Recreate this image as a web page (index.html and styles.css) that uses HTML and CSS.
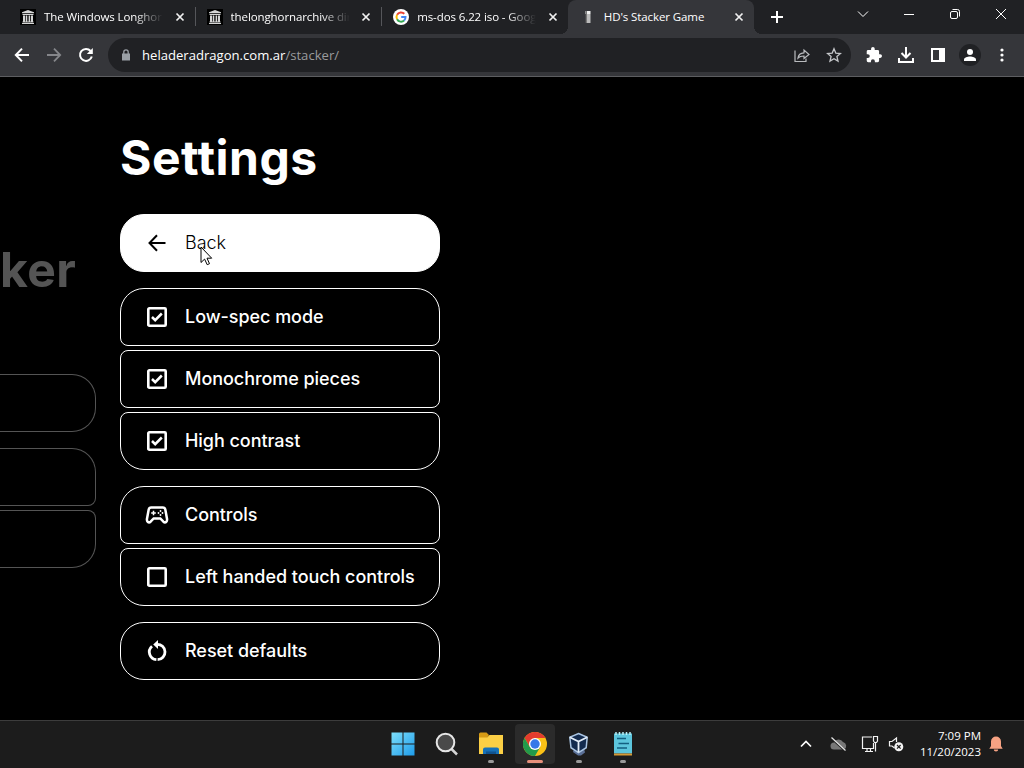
FILE: index.html
```
<!DOCTYPE html>
<html lang="en">
<head>
    <meta charset="UTF-8">
    <meta name="viewport" content="width=device-width, initial-scale=1.0">
    <title>HD's Stacker Game</title>
    <link rel="stylesheet" href="styles.css">
</head>
<body>
    <!-- icons used more than once -->
    <svg class="defs" width="0" height="0">
        <symbol id="close" viewBox="0 0 10 10"><path d="M1.5 1.5l7 7M8.5 1.5l-7 7" stroke="#f1f1f1" stroke-width="1.7"/></symbol>
        <symbol id="archive" viewBox="0 0 16 16">
            <path d="M0 0h16v16H0z" fill="#000"/>
            <path d="M8 1l6 2.3v1H2v-1zM2.5 5h11v1h-11zM3 6.5h2v6H3zM5.7 6.5h1.6v6H5.7zM8.6 6.5h1.6v6H8.6zM11 6.5h2v6h-2zM2.5 12.6h11v.9h-11zM2 14h12v1H2z" fill="#d5d5d5"/>
        </symbol>
        <symbol id="checked" viewBox="0 0 24 24">
            <rect x="3.3" y="3.3" width="17.4" height="17.4" rx="1" fill="none" stroke="#fff" stroke-width="2.6"/>
            <path d="M7 12l3.2 3.2 6.6-6.700" fill="none" stroke="#fff" stroke-width="2.5"/>
        </symbol>
    </svg>

    <header class="tabs">
        <div class="tab">
            <svg class="favicon" width="16" height="16"><use href="#archive"/></svg>
            <span class="tab-title fade">The Windows Longhorn</span>
            <svg class="tab-close" width="10" height="10"><use href="#close"/></svg>
        </div>
        <div class="tab divider">
            <svg class="favicon" width="16" height="16"><use href="#archive"/></svg>
            <span class="tab-title fade">thelonghornarchive directory</span>
            <svg class="tab-close" width="10" height="10"><use href="#close"/></svg>
        </div>
        <div class="tab divider">
            <svg class="favicon" width="16" height="16" viewBox="0 0 16 16">
                <circle cx="8" cy="8" r="8" fill="#fff"/>
                <g fill="none" stroke-width="2">
                    <path d="M4.1 5.8A4.5 4.5 0 0 1 11.3 4.8" stroke="#ea4335"/>
                    <path d="M4.1 5.8a4.5 4.5 0 0 0 0 4.5" stroke="#fbbc05"/>
                    <path d="M4.1 10.3a4.5 4.5 0 0 0 7 1.2" stroke="#34a853"/>
                    <path d="M11.1 11.5A4.5 4.5 0 0 0 12.5 8.1H8.2" stroke="#4285f4"/>
                </g>
            </svg>
            <span class="tab-title fade">ms-dos 6.22 iso - Google Search</span>
            <svg class="tab-close" width="10" height="10"><use href="#close"/></svg>
        </div>
        <div class="tab active">
            <svg class="favicon" width="16" height="16" viewBox="0 0 16 16">
                <path d="M5.5 2h5v3h-5z" fill="#eee"/>
                <path d="M6 5h4.500v9H6z" fill="#bbb"/>
                <path d="M5.700 2H7v12H5.700z" fill="#777"/>
            </svg>
            <span class="tab-title">HD's Stacker Game</span>
            <svg class="tab-close" width="10" height="10"><use href="#close"/></svg>
        </div>
        <svg class="new-tab" width="14" height="14" viewBox="0 0 14 14"><path d="M7 1v12M1 7h12" stroke="#fff" stroke-width="2"/></svg>
        <div class="window-buttons">
            <svg width="12" height="12" viewBox="0 0 12 12"><path d="M1 3.5l5 5 5-5"/></svg>
            <svg width="12" height="12" viewBox="0 0 12 12"><path d="M1 6.5h10"/></svg>
            <svg width="12" height="12" viewBox="0 0 12 12"><rect x="1.5" y="3.5" width="7" height="7" rx="1.5"/><path d="M3.5 1.5H8.5a2 2 0 0 1 2 2v5"/></svg>
            <svg width="12" height="12" viewBox="0 0 12 12"><path d="M1 1l10 10M11 1L1 11"/></svg>
        </div>
    </header>

    <nav class="toolbar">
        <svg width="16" height="16" viewBox="0 0 16 16"><path d="M15 8H2M8 1.6L1.8 8 8 14.4" fill="none" stroke="#fff" stroke-width="2"/></svg>
        <svg width="16" height="16" viewBox="0 0 16 16"><path d="M1 8h13M8 1.6L14.2 8 8 14.4" fill="none" stroke="#85868a" stroke-width="1.8"/></svg>
        <svg width="16" height="16" viewBox="0 0 16 16"><path d="M13.8 9.5A6 6 0 1 1 12.6 4" fill="none" stroke="#fff" stroke-width="2"/><path d="M14.8 1v6h-6z" fill="#fff"/></svg>
        <div class="address">
            <svg class="lock" width="10" height="12" viewBox="0 0 10 12"><path d="M1 4.5h8v7H1z" fill="#9aa0a6"/><path d="M2.8 5V3a2.2 2.2 0 0 1 4.4 0v2" fill="none" stroke="#9aa0a6" stroke-width="1.3"/></svg>
            <span class="url">heladeradragon.com.ar<span class="path">/stacker/</span></span>
            <svg class="share" width="16" height="16" viewBox="0 0 16 16" fill="none" stroke="#b9bbbe" stroke-width="1.2"><path d="M1 3.5v11h11V11.5"/><path d="M4 11c.4-3.4 2.5-5 6-5.2V3l5 4.5L10 11.5V9C7 9 5.3 9.5 4 11z"/></svg>
            <svg width="16" height="16" viewBox="0 0 16 16"><path d="M8 1.8l1.8 4.3 4.7.4-3.6 3 1.1 4.6L8 11.7l-4 2.4 1.100-4.600-3.600-3 4.700-.4z" fill="none" stroke="#c4c6c9" stroke-width="1.3"/></svg>
        </div>
        <div class="extensions">
            <svg width="16" height="16" viewBox="1 1 22 22" fill="#fff"><path d="M20.5 11H19V7a2 2 0 0 0-2-2h-4V3.500a2.500 2.500 0 0 0-5 0V5H4a2 2 0 0 0-2 2v3.800h1.500a2.700 2.700 0 0 1 0 5.400H2V20a2 2 0 0 0 2 2h3.800v-1.500a2.700 2.700 0 0 1 5.400 0V22H17a2 2 0 0 0 2-2v-4h1.500a2.500 2.500 0 0 0 0-5z"/></svg>
            <svg width="18" height="18" viewBox="0 0 18 18" fill="none" stroke="#fff" stroke-width="2"><path d="M9 1v10M4.500 7L9 11.500 13.500 7M2 12v4h14v-4"/></svg>
            <svg width="16" height="16" viewBox="0 0 16 16"><path d="M1 1h14v14H1zM3 3v10h6V3z" fill="#fff" fill-rule="evenodd"/></svg>
            <svg width="22" height="22" viewBox="0 0 22 22"><circle cx="11" cy="11" r="11" fill="#202124"/><circle cx="11" cy="8" r="3" fill="#fff"/><path d="M5 17v-1.500c0-2 3.500-3 6-3s6 1 6 3V17z" fill="#fff"/></svg>
            <svg width="4" height="14" viewBox="0 0 4 14" fill="#fff"><circle cx="2" cy="2" r="1.600"/><circle cx="2" cy="7" r="1.600"/><circle cx="2" cy="12" r="1.600"/></svg>
        </div>
    </nav>

    <main class="page">
        <section class="previous">
            <h1>ker</h1>
            <div class="ghost single"></div>
            <div class="ghost first"></div>
            <div class="ghost last"></div>
        </section>
        <section class="settings">
            <h1>Settings</h1>
            <div class="group">
                <div class="option back">
                    <svg width="24" height="24" viewBox="0 0 24 24"><path d="M20.500 12H5M12 4.200L4.500 12l7.500 7.800" fill="none" stroke="#000" stroke-width="2"/></svg>
                    <span>Back</span>
                </div>
            </div>
            <div class="group">
                <div class="option">
                    <svg width="24" height="24"><use href="#checked"/></svg>
                    <span>Low-spec mode</span>
                </div>
                <div class="option">
                    <svg width="24" height="24"><use href="#checked"/></svg>
                    <span>Monochrome pieces</span>
                </div>
                <div class="option">
                    <svg width="24" height="24"><use href="#checked"/></svg>
                    <span>High contrast</span>
                </div>
            </div>
            <div class="group">
                <div class="option">
                    <svg width="24" height="24" viewBox="0 0 24 24">
                        <path d="M6.200 4.500h11.600c1.300 0 2.200.7 2.500 2l1.700 9.200c.5 2.900-1.600 4.700-3.600 3L15.300 15.500H8.700l-3.100 3.200C3.600 20.400 1.500 18.600 2 15.700l1.700-9.200c.3-1.300 1.200-2 2.500-2z" fill="none" stroke="#fff" stroke-width="2.500"/>
                        <path d="M8.500 7.700v4.600M6.200 10h4.600" stroke="#fff" stroke-width="1.500"/>
                        <g fill="#fff"><circle cx="15.500" cy="8" r=".9"/><circle cx="15.500" cy="12" r=".9"/><circle cx="13.500" cy="10" r=".9"/><circle cx="17.500" cy="10" r=".9"/></g>
                    </svg>
                    <span>Controls</span>
                </div>
                <div class="option">
                    <svg width="24" height="24" viewBox="0 0 24 24"><rect x="3.300" y="3.300" width="17.400" height="17.400" rx="1" fill="none" stroke="#fff" stroke-width="2.600"/></svg>
                    <span>Left handed touch controls</span>
                </div>
            </div>
            <div class="group">
                <div class="option">
                    <svg width="24" height="24" viewBox="0 0 24 24">
                        <path d="M7 7.200a7.700 7.700 0 0 0 4.400 13.500M12.600 20.700A7.700 7.700 0 0 0 12 5.300H11" fill="none" stroke="#fff" stroke-width="2.800"/>
                        <path d="M13 1v9L8.200 5.500z" fill="#fff"/>
                    </svg>
                    <span>Reset defaults</span>
                </div>
            </div>
        </section>
    </main>

    <footer class="taskbar">
        <div class="apps">
            <div class="app idle">
                <svg width="24" height="24" viewBox="0 0 24 24">
                    <linearGradient id="win" x1="0" y1="0" x2="24" y2="24" gradientUnits="userSpaceOnUse"><stop offset="0" stop-color="#7fe0fb"/><stop offset="1" stop-color="#1c9bea"/></linearGradient>
                    <path d="M.5.5h11v11H.5zM12.5.5h11v11h-11zM.5 12.500h11v11H.5zM12.500 12.500h11v11h-11z" fill="url(#win)"/>
                </svg>
            </div>
            <div class="app idle">
                <svg width="24" height="24" viewBox="0 0 24 24"><path d="M16.500 17l5.500 5.500" stroke="#d5d5d5" stroke-width="2.500"/><circle cx="10.500" cy="10.500" r="8.800" fill="#4a4a4a" stroke="#e6e6e6" stroke-width="2"/></svg>
            </div>
            <div class="app">
                <svg width="24" height="24" viewBox="0 0 24 24">
                    <path d="M0 3V2a1.500 1.500 0 0 1 1.500-1.500h6L10 3l-2 3H0z" fill="#d69b15"/>
                    <path d="M0 5.500h8L10.500 3H24v19H0z" fill="#fbcf45"/>
                    <path d="M4 22v-4.500a2 2 0 0 1 2-2h12a2 2 0 0 1 2 2V22z" fill="#1671b8"/>
                    <path d="M7 22v-2.500h10V22z" fill="#105390"/>
                </svg>
            </div>
            <div class="app open">
                <svg width="24" height="24" viewBox="0 0 24 24">
                    <circle cx="12" cy="12" r="12" fill="#fbc116"/>
                    <path d="M1.600 6A12 12 0 0 1 22.400 6H12L6.800 15z" fill="#e33b2e"/>
                    <path d="M1.600 6A12 12 0 0 0 12 24l5.200-9H6.800z" fill="#229a4b"/>
                    <circle cx="12" cy="12" r="6" fill="#fff"/>
                    <circle cx="12" cy="12" r="4.700" fill="#3678e8"/>
                </svg>
            </div>
            <div class="app">
                <svg width="24" height="24" viewBox="0 0 24 24">
                    <path d="M7 17l-1 3 5 3.500h3l4-3-1-4z" fill="#5a6f96"/>
                    <path d="M11.500 1.500l8.700 3.700-1 10.500-7.700 5-7.500-5-1.200-10.500z" fill="#132b4e" stroke="#a9c4e2" stroke-width="1.500"/>
                    <path d="M2.800 5.200l8.700 4.300 8.700-4.300M11.500 9.500v11" fill="none" stroke="#e3edf8" stroke-width="1.800"/>
                </svg>
            </div>
            <div class="app">
                <svg width="24" height="24" viewBox="0 0 24 24">
                    <path d="M3 1.500h18v20H3z" fill="#5cc5dc"/>
                    <path d="M3 21.500h18v2H3z" fill="#d79a35"/>
                    <path d="M5 0v3M8.500 0v3M12 0v3M15.500 0v3M19 0v3" stroke="#b9eef5" stroke-width="1.500"/>
                    <path d="M6 6.500h9M7.500 11.500h10.500M6 16h10" stroke="#135f80" stroke-width="1.700"/>
                </svg>
            </div>
        </div>
        <div class="tray">
            <svg class="chevron" width="12" height="8" viewBox="0 0 12 8"><path d="M1 6.500l5-5 5 5" fill="none" stroke="#fff" stroke-width="1.700"/></svg>
            <svg class="cloud" width="18" height="16" viewBox="0 0 18 16"><path d="M4 13.500a3.500 3.500 0 0 1 0-7A5 5 0 0 1 13 6a4 4 0 0 1 1 7.500z" fill="#777"/><path d="M1.500 2.500l13.500 12" stroke="#1c1c1c" stroke-width="2"/><path d="M1.500 1.500l14 13" stroke="#e8e8e8" stroke-width="1.200"/></svg>
            <svg class="network" width="18" height="18" viewBox="0 0 18 18" fill="none" stroke="#f2f2f2" stroke-width="1.200"><path d="M11 2H1.500v11.500h11V8M4 16.500h8M6 13.500v3M9.500 13.500v3"/><path d="M12.500 1.500h4V6l-1 1.500h-2l-1-1.500zM14.500 7.500v9"/></svg>
            <svg class="volume" width="16" height="16" viewBox="0 0 16 16"><path d="M6.500 12L4 10H1.500V5.500H4L8.500 2v4" fill="none" stroke="#f2f2f2" stroke-width="1.200"/><circle cx="10.800" cy="10.800" r="4.500" fill="#f4f4f4"/><path d="M9 9l3.600 3.600M12.600 9L9 12.600" stroke="#1c1c1c" stroke-width="1.200"/></svg>
            <div class="clock">7:09 PM<br>11/20/2023</div>
            <svg width="14" height="16" viewBox="0 0 14 16"><path d="M7 .5a5 5 0 0 1 5 5V10l1.700 2.800H.3L2 10V5.500a5 5 0 0 1 5-5zM4.800 13.500h4.400a2.200 2 0 0 1-4.400 0z" fill="#f6a283"/></svg>
        </div>
    </footer>

    <svg class="cursor" width="13" height="20" viewBox="0 0 13 20"><path d="M1 1v15.500l3.600-3.400 2.600 5.600 2.300-1-2.500-5.500h4.700z" fill="#fff" stroke="#000"/></svg>
</body>
</html>
```
FILE: styles.css
```
* {
    box-sizing: border-box;
}
body {
    background-color: #000;
    color: #fff;
    font-family: "Open Sans", "Noto Sans", sans-serif;
    margin: 0;
    height: 768px;
    display: flex;
    flex-direction: column;
    overflow: hidden;
    position: relative;
}
svg {
    display: block;
    flex: none;
}
.defs {
    position: absolute;
}

/* browser tabs */
.tabs {
    background-color: #202124;
    height: 34px;
    padding-left: 8px;
    display: flex;
    align-items: center;
    flex: none;
}
.tab {
    width: 186.6px;
    height: 34px;
    padding: 0 10px 0 12px;
    display: flex;
    align-items: center;
    position: relative;
}
.tab.divider::before {
    content: "";
    position: absolute;
    left: 0;
    top: 7px;
    width: 1px;
    height: 19px;
    background-color: #55565a;
}
.tab.active {
    background-color: #35363a;
    border-radius: 8px 8px 0 0;
}
.tab.active::before, .tab.active::after {
    content: "";
    position: absolute;
    bottom: 0;
    width: 8px;
    height: 8px;
}
.tab.active::before {
    left: -8px;
    background: radial-gradient(circle at 0 0, transparent 8px, #35363a 8px);
}
.tab.active::after {
    right: -8px;
    background: radial-gradient(circle at 100% 0, transparent 8px, #35363a 8px);
}
.tab-title {
    width: 119px;
    margin-left: 8px;
    margin-top: -1px;
    overflow: hidden;
    white-space: nowrap;
    font-size: 11.5px;
    letter-spacing: -0.1px;
}
.fade {
    -webkit-mask-image: linear-gradient(to right, #000 90px, transparent 119px);
    mask-image: linear-gradient(to right, #000 90px, transparent 119px);
}
.tab-close {
    margin-left: 12px;
}
.new-tab {
    margin-left: 16px;
}
.window-buttons {
    display: flex;
    gap: 34px;
    margin: -6px 17px 0 auto;
}
.window-buttons svg {
    fill: none;
    stroke: #fff;
    stroke-width: 1;
}

/* toolbar */
.toolbar {
    background-color: #35363a;
    height: 43px;
    padding: 0 6px 0 14px;
    border-bottom: 1px solid #5d5e61;
    display: flex;
    align-items: center;
    gap: 16px;
    flex: none;
}
.address {
    background-color: #202124;
    width: 743px;
    height: 34px;
    margin-left: -2px;
    padding: 0 9px 0 13px;
    border-radius: 17px;
    display: flex;
    align-items: center;
}
.url {
    margin-left: 11px;
    font-size: 13.1px;
}
.path {
    color: #9a9b9d;
}
.share {
    margin-left: auto;
    margin-right: 16px;
}
.extensions {
    display: grid;
    grid-template-columns: repeat(5, 32px);
    align-items: center;
    justify-items: center;
    margin-left: -9px;
}

/* game menu */
.page {
    height: 643px;
    flex: none;
    display: flex;
    font-family: Inter, sans-serif;
}
.page h1 {
    margin: 0;
    font-size: 48px;
    font-weight: 700;
    line-height: 58px;
    letter-spacing: 0.5px;
}
.previous {
    width: 96px;
    padding-top: 164px;
    opacity: 0.33;
}
.previous h1 {
    padding-bottom: 75px;
}
.ghost {
    height: 58px;
    border: 1px solid #fff;
    border-left: none;
}
.ghost.single {
    border-radius: 0 24px 24px 0;
    margin-bottom: 16px;
}
.ghost.first {
    border-radius: 0 24px 8px 0;
    margin-bottom: 4px;
}
.ghost.last {
    border-radius: 0 8px 24px 0;
}
.settings {
    width: 320px;
    margin-left: 24px;
    padding-top: 52px;
}
.settings h1 {
    margin-bottom: 27px;
}
.group {
    display: flex;
    flex-direction: column;
    gap: 4px;
    margin-bottom: 16px;
}
.option {
    height: 58px;
    padding-left: 24px;
    border: 1px solid #fff;
    border-radius: 8px;
    display: flex;
    align-items: center;
    gap: 16px;
    font-size: 18px;
    font-weight: 450;
    letter-spacing: -0.05px;
    white-space: nowrap;
}
.option span {
    padding-bottom: 2px;
}
.option:first-child {
    border-top-left-radius: 24px;
    border-top-right-radius: 24px;
}
.option:last-child {
    border-bottom-left-radius: 24px;
    border-bottom-right-radius: 24px;
}
.option.back {
    background-color: #fff;
    color: #000;
    font-weight: 300;
}

/* taskbar */
.taskbar {
    background-color: #1c1c1c;
    height: 48px;
    border-top: 1px solid #3c3c3c;
    padding: 0 0 2px 383px;
    display: flex;
    align-items: center;
    flex: none;
}
.apps {
    display: flex;
    gap: 4px;
}
.app {
    width: 40px;
    height: 40px;
    padding-top: 8px;
    border-radius: 4px;
    display: flex;
    flex-direction: column;
    align-items: center;
}
.app::after {
    content: "";
    width: 6px;
    height: 3px;
    margin-top: 4px;
    border-radius: 2px;
    background-color: #9a9a9a;
}
.app.idle::after {
    display: none;
}
.app.open {
    background-color: #2b2b2b;
}
.app.open::after {
    width: 16px;
    background-color: #e8907c;
}
.tray {
    display: flex;
    align-items: center;
    margin-left: auto;
    padding-right: 21px;
}
.cloud {
    margin-left: 18px;
}
.network {
    margin-left: 13px;
}
.volume {
    margin-left: 9px;
}
.clock {
    width: 77px;
    font-size: 11.5px;
    line-height: 16px;
    text-align: right;
    margin-right: 8px;
}

.cursor {
    position: absolute;
    left: 200px;
    top: 246px;
}
```
